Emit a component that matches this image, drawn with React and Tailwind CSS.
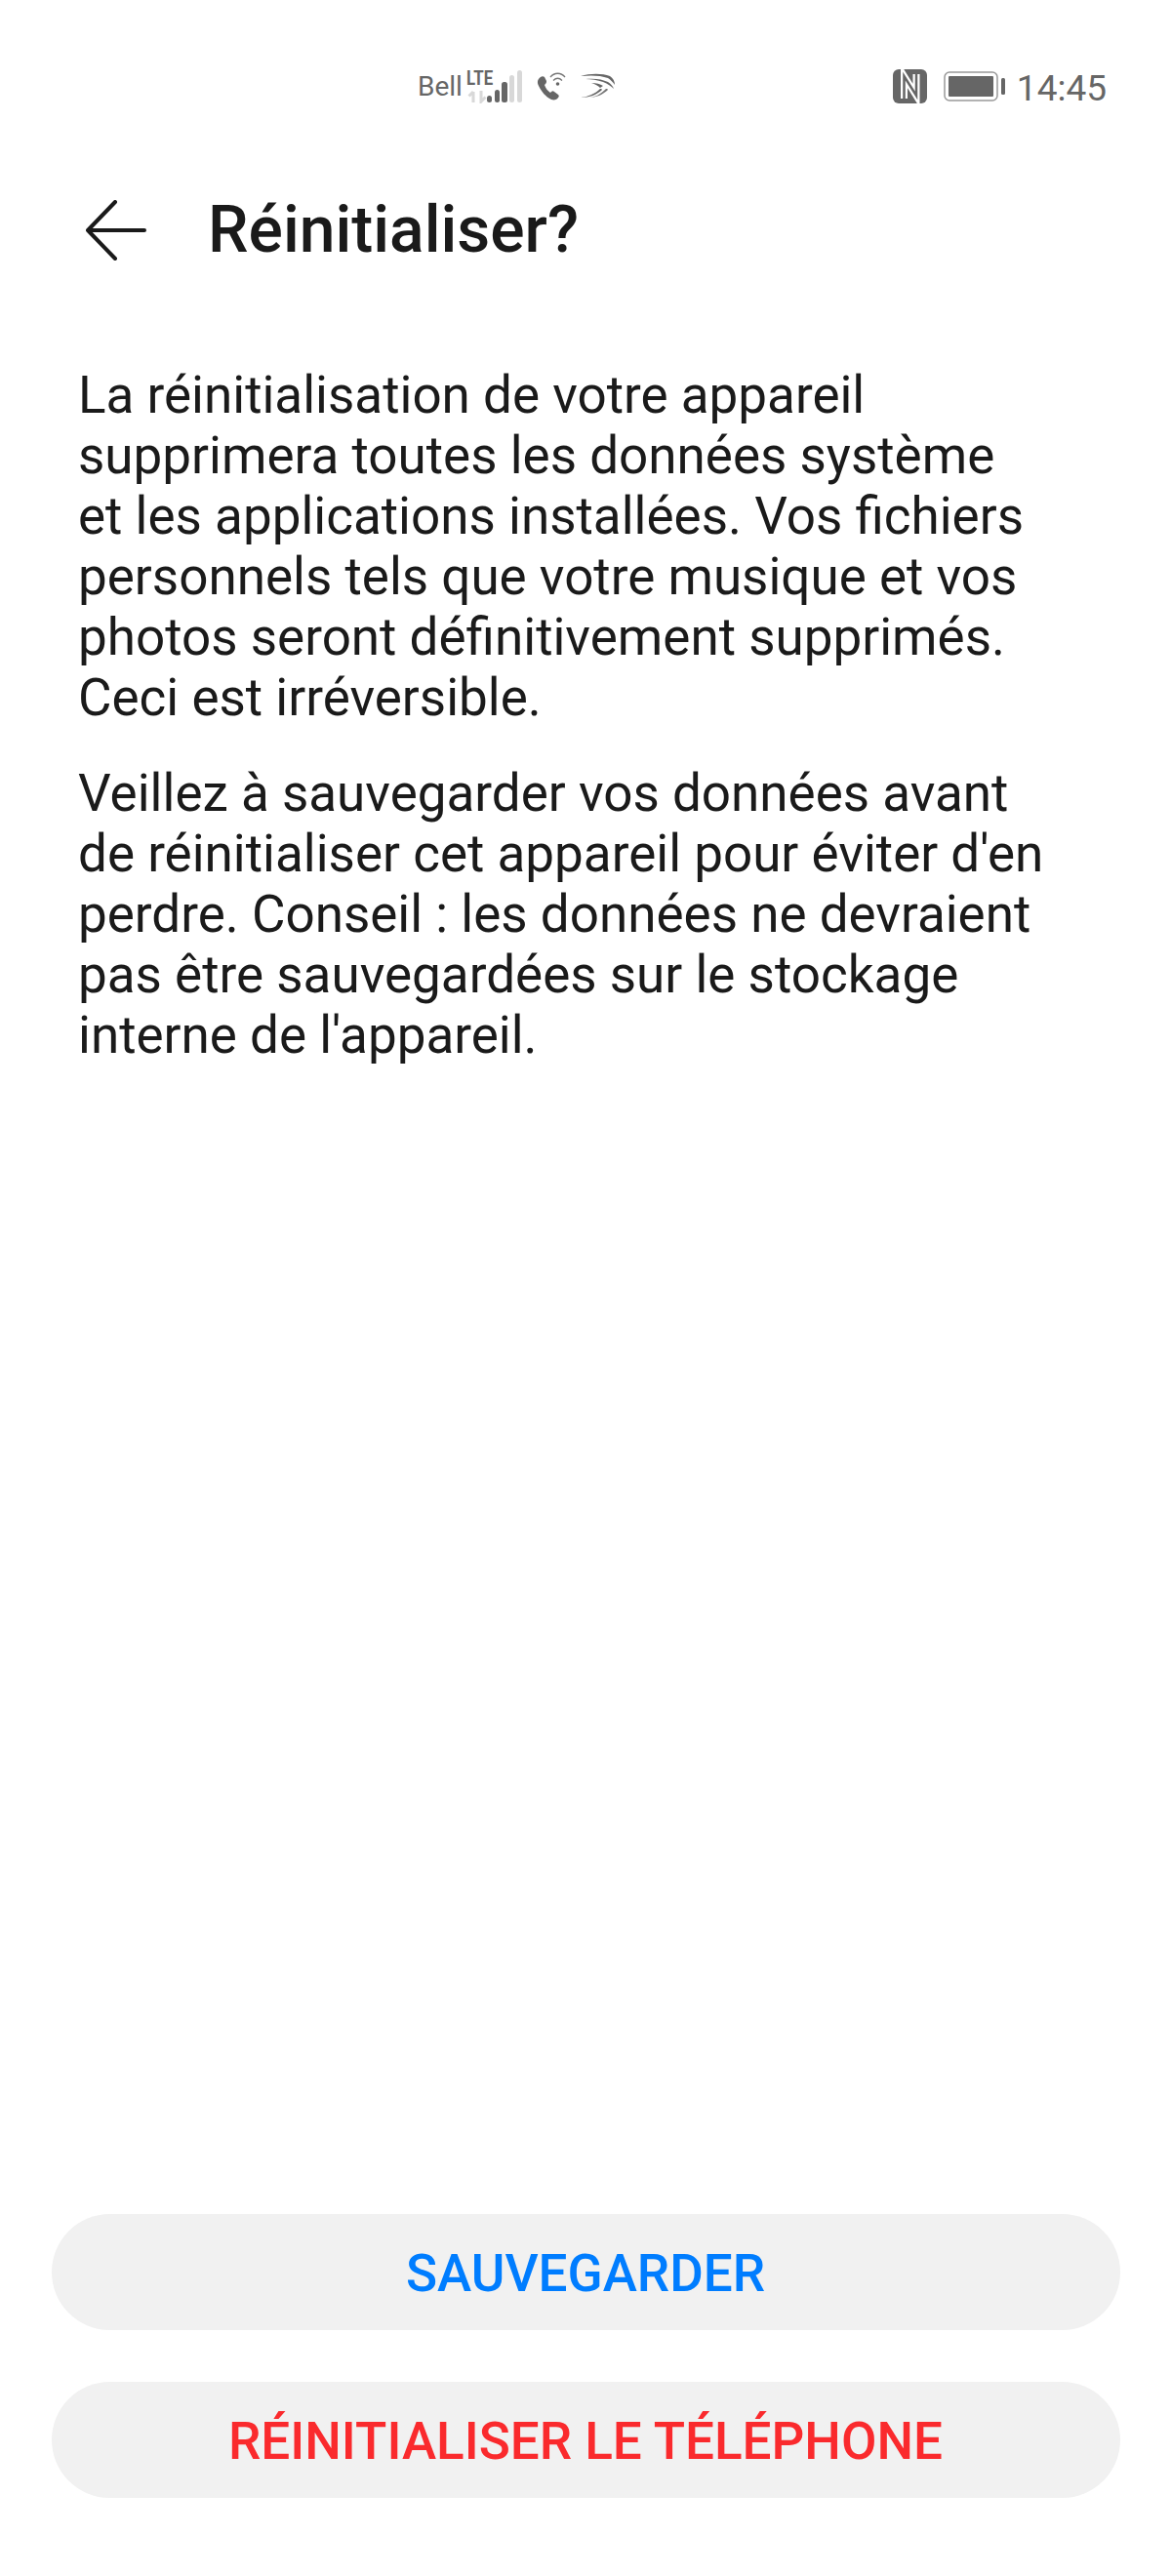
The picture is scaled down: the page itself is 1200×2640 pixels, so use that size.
const SignalBars = () => (
    <svg width="60" height="36" viewBox="0 0 60 36" fill="none">
        <path d="M7 35V24M2.500 28.500L7 24" stroke="#d8d8d8" strokeWidth="3" />
        <path d="M15 23V34L19.500 29.500" stroke="#d8d8d8" strokeWidth="3" />
        <rect x="21" y="28" width="5" height="7" rx="2.5" fill="#666" />
        <rect x="29" y="22" width="5" height="13" rx="2.5" fill="#666" />
        <rect x="36" y="14" width="6" height="21" rx="2.5" fill="#666" />
        <rect x="44" y="7" width="5" height="28" rx="2.5" fill="#d8d8d8" />
        <rect x="52" y="2" width="5" height="33" rx="2.5" fill="#d8d8d8" />
    </svg>
);

const WifiCall = () => (
    <svg width="30" height="30" viewBox="0 0 30 30" fill="none">
        <path d="M4 6C1 8 0 11 2 15c3 6 7 11 13 14 3 1 6 0 7-2 1-1 1-2 0-3l-4-3c-1-1-2-1-3 0l-1 1c-3-2-5-5-6-8l1-1c1-1 1-2 1-3L8 6C7 5 5 5 4 6z" fill="#666" />
        <path d="M14 6C18 1 25 1 29 6M17 9.500C20 6.500 23 6.500 26 9.500" stroke="#777" strokeWidth="1.300" />
        <circle cx="21.500" cy="13" r="1.800" fill="#666" />
    </svg>
);

const SwiftKey = () => (
    <svg width="36" height="26" viewBox="0 0 36 26" fill="none">
        <path d="M0 3C10 0 22 0 30 3c3 2 5 5 5 9-2-3-4-5-7-7C20 2 10 2 0 3z" fill="#666" />
        <path d="M5 6c9-1 17 0 23 3 3 2 5 4 6 7-3-3-6-5-11-7C17 7 11 6 5 6z" fill="#666" />
        <path d="M11 10c5 0 9 1 12 3l-3 2c-2-2-5-4-9-5z" fill="#666" />
        <path d="M0 25c8-1 15-4 20-9 1 0 2 0 2 1-5 5-13 8-22 8z" fill="#666" />
        <path d="M7 25c8 0 14-4 19-9 1 0 2 0 2 1-5 5-12 8-21 8z" fill="#777" />
    </svg>
);

const NfcIcon = () => (
    <svg width="35" height="35" viewBox="0 0 35 35" fill="none">
        <rect width="35" height="35" rx="6" fill="#666" />
        <path d="M11.500 30V7L24 27V5" stroke="#fff" strokeWidth="7" />
        <path d="M11.500 31V7L24 27V4" stroke="#666" strokeWidth="2.500" />
    </svg>
);

const Battery = () => (
    <svg width="64" height="31" viewBox="0 0 64 31" fill="none">
        <rect x="1" y="1" width="54" height="29" rx="5" stroke="#999" strokeWidth="1.500" />
        <rect x="5" y="5" width="46" height="21" rx="1" fill="#666" />
        <rect x="59" y="7" width="4" height="17" rx="1.500" fill="#666" />
    </svg>
);

const StatusBar = () => (
    <div className="h-[140px] pt-[69px] flex items-start text-[#666]">
        <div className="ml-[428px] flex items-center h-[38px]">
            <span className="w-[50px] text-[28px] leading-none mt-[2px]">Bell</span>
            <div className="relative w-[60px] h-[36px]">
                <span className="absolute left-0 top-0 text-[21px] leading-none font-bold scale-x-[.8] origin-left">LTE</span>
                <SignalBars />
            </div>
            <div className="ml-[12px]"><WifiCall /></div>
            <div className="ml-[15px]"><SwiftKey /></div>
        </div>
        <div className="ml-auto mr-[66px] flex items-center h-[38px]">
            <NfcIcon />
            <div className="ml-[17px]"><Battery /></div>
            <span className="ml-[11px] mt-[4px] text-[37px] leading-none">14:45</span>
        </div>
    </div>
);

const PillButton = ({ color, children }) => (
    <button className={`w-[1095px] h-[119px] pt-[3px] rounded-full bg-[#f1f1f1] text-[53px] font-medium leading-none ${color}`}>
        {children}
    </button>
);

export default function App() {
    return (
        <div className="w-[1200px] h-[2640px] bg-white flex flex-col font-['Roboto',sans-serif]">
            <StatusBar />

            <div className="h-[112px] mt-[40px] flex items-center pl-[88px]">
                <svg width="62" height="62" viewBox="0 0 62 62" fill="none" stroke="#1a1a1a" strokeWidth="4" strokeLinecap="round" strokeLinejoin="round">
                    <path d="M60 31H2M30 2L2 31l28 29" />
                </svg>
                <h1 className="ml-[63px] text-[66px] font-medium text-[#1a1a1a] leading-none">Réinitialiser?</h1>
            </div>

            <div className="mt-[82px] pl-[80px] text-[53px] leading-[62px] text-[#1a1a1a] whitespace-nowrap">
                <p>
                    La réinitialisation de votre appareil<br />
                    supprimera toutes les données système<br />
                    et les applications installées. Vos fichiers<br />
                    personnels tels que votre musique et vos<br />
                    photos seront définitivement supprimés.<br />
                    Ceci est irréversible.
                </p>
                <p className="mt-[36px]">
                    Veillez à sauvegarder vos données avant<br />
                    de réinitialiser cet appareil pour éviter d'en<br />
                    perdre. Conseil : les données ne devraient<br />
                    pas être sauvegardées sur le stockage<br />
                    interne de l'appareil.
                </p>
            </div>

            <div className="mt-auto mb-[80px] flex flex-col items-center gap-[53px]">
                <PillButton color="text-[#007dff]">SAUVEGARDER</PillButton>
                <PillButton color="text-[#fa2a2d]">RÉINITIALISER LE TÉLÉPHONE</PillButton>
            </div>
        </div>
    );
}
